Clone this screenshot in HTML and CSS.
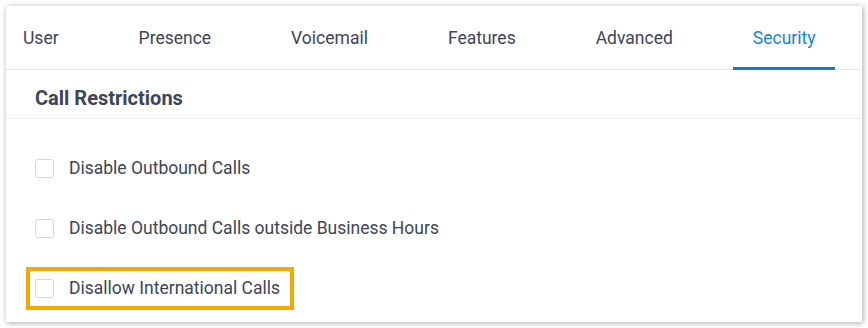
FILE: index.html
```html
<!DOCTYPE html>
<html>
<head>
<meta charset="utf-8">
<link rel="stylesheet" href="styles.css">
</head>
<body>
<div class="panel">
  <div class="tabs">
    <div class="tab">User</div>
    <div class="tab">Presence</div>
    <div class="tab">Voicemail</div>
    <div class="tab">Features</div>
    <div class="tab">Advanced</div>
    <div class="tab active">Security</div>
  </div>
  <div class="section-title">Call Restrictions</div>
  <div class="options">
    <div class="row"><span class="check"></span><span class="label">Disable Outbound Calls</span></div>
    <div class="row"><span class="check"></span><span class="label">Disable Outbound Calls outside Business Hours</span></div>
    <div class="row"><div class="highlight"><span class="check"></span><span class="label">Disallow International Calls</span></div></div>
  </div>
</div>
</body>
</html>
```
FILE: styles.css
```css
* { box-sizing: border-box; }
html, body { margin: 0; padding: 0; background: #fff; }
body { padding: 6px 6px 6px 6px; font-family: Roboto, "Liberation Sans", sans-serif; }
.panel {
  width: 856px;
  height: 316px;
  background: #fff;
  box-shadow: 1px 1px 6px rgba(0,0,0,0.35);
  overflow: hidden;
}
.tabs {
  display: flex;
  height: 64px;
  border-bottom: 1px solid #e6e8ee;
  margin-left: -2px;
}
.tab {
  padding: 0 20px;
  margin-right: 40px;
  font-size: 17.5px;
  color: #3d4556;
  line-height: 64px;
  height: 64px;
  border-bottom: 3px solid transparent;
  white-space: nowrap;
}
.tab:first-child { padding-left: 19px; }
.tab.active { color: #1784d6; border-bottom-color: #0a7fd0; padding-left: 20px; }
.section-title {
  height: 49px;
  border-bottom: 1px solid #eceef2;
  padding-left: 29px;
  font-size: 20px;
  font-weight: 700;
  color: #3d4556;
  line-height: 57px;
}
.options { padding-top: 19px; }
.row {
  height: 60px;
  display: flex;
  align-items: center;
  padding-left: 29px;
}
.check {
  width: 19px;
  height: 19px;
  border: 1px solid #d6d8e0;
  border-radius: 3px;
  background: #fff;
  flex: none;
}
.label {
  margin-left: 15px;
  font-size: 17.5px;
  color: #3d4556;
  white-space: nowrap;
}
.highlight {
  display: flex;
  align-items: center;
  border: 4px solid #f5a800;
  margin-left: -9px;
  padding: 0 10px 0 5px;
  height: 43px;
}
```
